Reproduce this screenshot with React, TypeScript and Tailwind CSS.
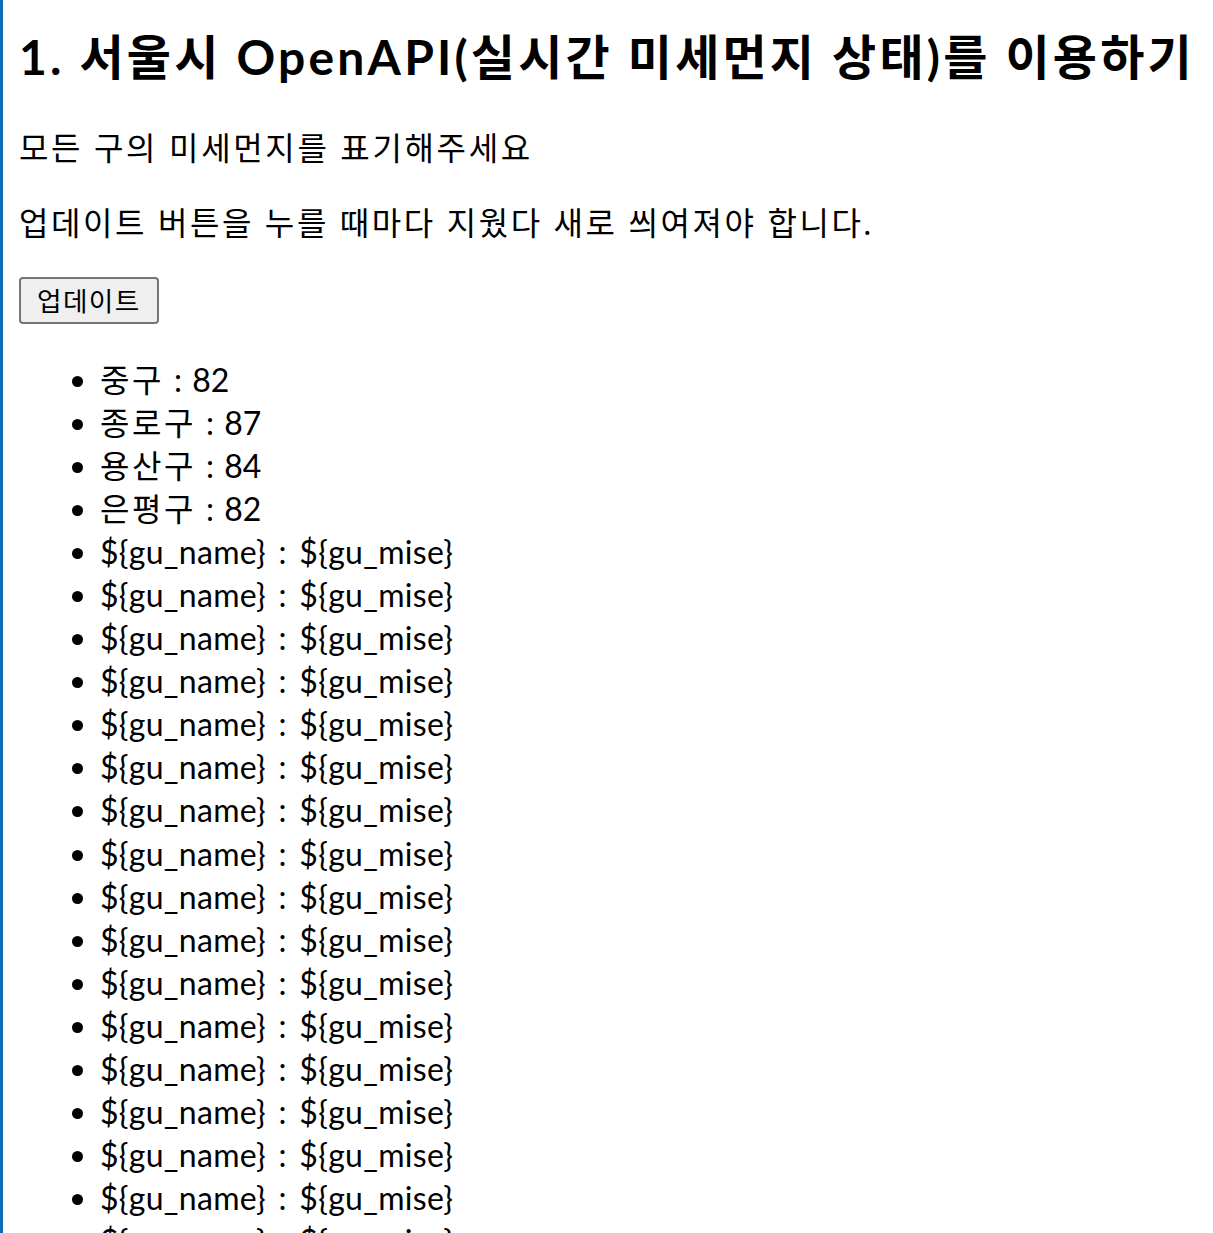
const districts = [
  { name: "중구", mise: "82" },
  { name: "종로구", mise: "87" },
  { name: "용산구", mise: "84" },
  { name: "은평구", mise: "82" },
];

// rows not yet filled in still show the raw template string
const pendingRows = Array.from({ length: 21 }, (_, i) => i);

export default function App() {
  return (
    <div
      className="min-h-[1233px] border-l-[3px] border-[#0a6cb8] bg-white pl-4 text-black"
      style={{ fontFamily: '"Lato", "Noto Sans CJK KR", sans-serif' }}
    >
      <h2 className="pt-[25px] text-[48px] font-bold leading-[64px] tracking-[3.2px] whitespace-nowrap">
        1. 서울시 OpenAPI(실시간 미세먼지 상태)를 이용하기
      </h2>
      <p className="mt-[37px] text-[32px] leading-[43px] tracking-[2.65px]">모든 구의 미세먼지를 표기해주세요</p>
      <p className="mt-[32px] text-[32px] leading-[43px] tracking-[2.6px]">
        업데이트 버튼을 누를 때마다 지웠다 새로 씌여져야 합니다.
      </p>
      <div className="mt-[33px]">
        <button
          type="button"
          className="h-[47px] rounded-[4px] border-2 border-[#767676] bg-[#efefef] px-[16px] text-[26.67px] leading-[40px] tracking-[1.4px]"
        >
          업데이트
        </button>
      </div>
      <ul className="mt-[34px] list-disc pl-[81px] text-[32px] leading-[43.05px]">
        {districts.map((d) => (
          <li key={d.name} className="[word-spacing:2px]">
            <span className="tracking-[2.5px]">{d.name}</span> : {d.mise}
          </li>
        ))}
        {pendingRows.map((i) => (
          <li key={`row-${i}`} className="tracking-[0.3px] [word-spacing:4px]">
            {"${gu_name} : ${gu_mise}"}
          </li>
        ))}
      </ul>
    </div>
  );
}
